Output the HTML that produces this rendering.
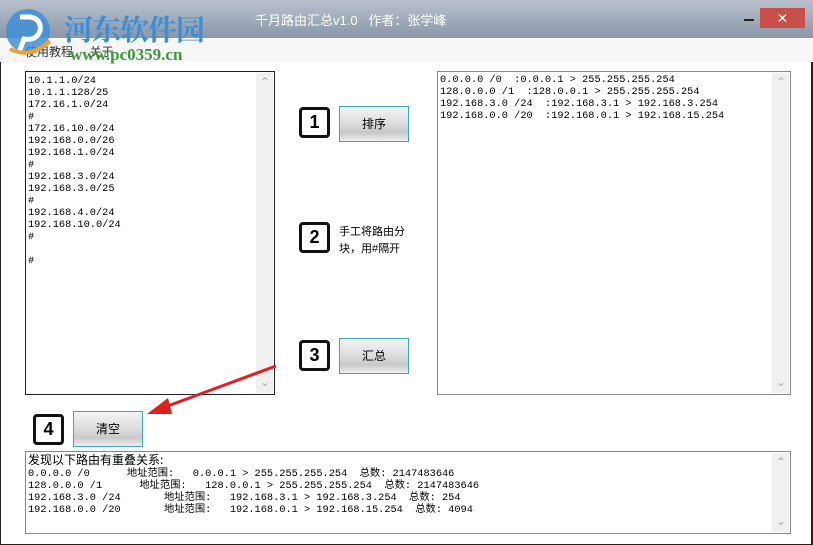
<!DOCTYPE html>
<html><head><meta charset="utf-8"><style>
*{margin:0;padding:0;box-sizing:border-box}
body{width:813px;height:545px;overflow:hidden;background:#fff;font-family:"Liberation Sans","Noto Sans CJK SC",sans-serif;position:relative}
.abs{position:absolute}
.title{left:0;top:0;width:813px;height:38px;background:linear-gradient(#b9c2cd,#8a97a8);}
.menu{left:0;top:38px;width:813px;height:24px;background:#f7f7f7}
.win{left:0;top:62px;width:813px;height:483px;background:#fff;border-left:1px solid #222;border-right:2px solid #222;border-bottom:1px solid #222}
.tb{background:#fff;border:1px solid #222}
.tb pre{font-family:"Liberation Mono","Noto Sans CJK SC",monospace;font-size:10.3px;line-height:12px;color:#000}
.sb{position:absolute;right:0;top:0;bottom:0;width:17px;background:#f0f0f0}
.sb:before{content:"⌃";position:absolute;top:2px;left:4px;font-size:12px;color:#aaa}
.sb:after{content:"⌄";position:absolute;bottom:4px;left:4px;font-size:12px;color:#aaa}
.btn{border:1px solid #3aa7cf;background:linear-gradient(#f4f4f4,#dcdcdc 50%,#c8c8c8 75%,#eee);font-size:12px;text-align:center;line-height:34px;color:#000}
.num{border:3px solid #111;border-radius:4px;font:bold 18px "Liberation Sans",sans-serif;text-align:center;line-height:24px;width:31px;height:31px;background:#fff}
</style></head><body>
<div class="abs title"></div>
<div class="abs" style="left:255px;top:10px;font-size:13px;color:#fff">千月路由汇总v1.0&nbsp;&nbsp;&nbsp;作者：张学峰</div>
<div class="abs" style="left:744px;top:19px;width:10px;height:2px;background:#222"></div>
<div class="abs" style="left:760px;top:8px;width:45px;height:20px;background:#c9504a;color:#fff;text-align:center;font-size:14px;line-height:20px">✕</div>
<div class="abs menu"></div>
<div class="abs" style="left:25px;top:43px;font-size:12px;color:#333">使用教程&nbsp;&nbsp;&nbsp;&nbsp;&nbsp;关于</div>
<div class="abs win"></div>
<svg class="abs" style="left:0;top:5px" width="60" height="58"><circle cx="28" cy="26" r="22" fill="#3f8fd6" opacity=".85"/><path d="M20 12 L30 12 Q42 14 40 26 Q36 36 24 34 L18 50" stroke="#fff" stroke-width="5" fill="none"/><path d="M10 44 Q30 54 50 36" stroke="#f0a030" stroke-width="4" fill="none"/></svg>
<div class="abs" style="left:64px;top:8px;font-size:29px;font-weight:bold;color:#3d8ed8;font-family:'Noto Serif CJK SC',serif;letter-spacing:-1px">河东软件园</div>
<div class="abs" style="left:70px;top:45px;font:bold 17px 'Liberation Serif',serif;color:#3a9a3a">www.pc0359.cn</div>

<div class="abs tb" style="left:25px;top:71px;width:250px;height:324px"><div class="sb" style="top:1px;bottom:1px;right:1px"></div>
<pre style="padding:3px 0 0 2px">10.1.1.0/24
10.1.1.128/25
172.16.1.0/24
#
172.16.10.0/24
192.168.0.0/26
192.168.1.0/24
#
192.168.3.0/24
192.168.3.0/25
#
192.168.4.0/24
192.168.10.0/24
#

#</pre></div>
<div class="abs tb" style="left:437px;top:71px;width:354px;height:324px;border-color:#888"><div class="sb" style="top:1px;bottom:1px;right:1px"></div>
<pre style="padding:2px 0 0 2px">0.0.0.0 /0  :0.0.0.1 > 255.255.255.254
128.0.0.0 /1  :128.0.0.1 > 255.255.255.254
192.168.3.0 /24  :192.168.3.1 > 192.168.3.254
192.168.0.0 /20  :192.168.0.1 > 192.168.15.254</pre></div>

<div class="abs num" style="left:299px;top:107px">1</div>
<div class="abs btn" style="left:339px;top:106px;width:70px;height:36px">排序</div>
<div class="abs num" style="left:299px;top:222px">2</div>
<div class="abs" style="left:339px;top:224px;font-size:11px;line-height:17px">手工将路由分<br>块，用#隔开</div>
<div class="abs num" style="left:299px;top:340px">3</div>
<div class="abs btn" style="left:339px;top:338px;width:70px;height:36px">汇总</div>
<div class="abs num" style="left:33px;top:414px">4</div>
<div class="abs btn" style="left:73px;top:411px;width:70px;height:36px">清空</div>

<div class="abs tb" style="left:25px;top:451px;width:766px;height:83px;border-color:#888"><div class="sb" style="top:1px;bottom:1px;right:1px"></div>
<pre style="padding:2px 0 0 2px"><span style="font-size:12px;font-family:'Noto Sans CJK SC',sans-serif;line-height:12px">发现以下路由有重叠关系:</span>
0.0.0.0 /0      地址范围:   0.0.0.1 > 255.255.255.254  总数: 2147483646
128.0.0.0 /1      地址范围:   128.0.0.1 > 255.255.255.254  总数: 2147483646
192.168.3.0 /24       地址范围:   192.168.3.1 > 192.168.3.254  总数: 254
192.168.0.0 /20       地址范围:   192.168.0.1 > 192.168.15.254  总数: 4094</pre></div>

<svg class="abs" style="left:0;top:0" width="813" height="545"><line x1="276" y1="366" x2="165" y2="407" stroke="#e02020" stroke-width="3"/><polygon points="147,414 168,398 172,414" fill="#e02020"/></svg>
</body></html>
